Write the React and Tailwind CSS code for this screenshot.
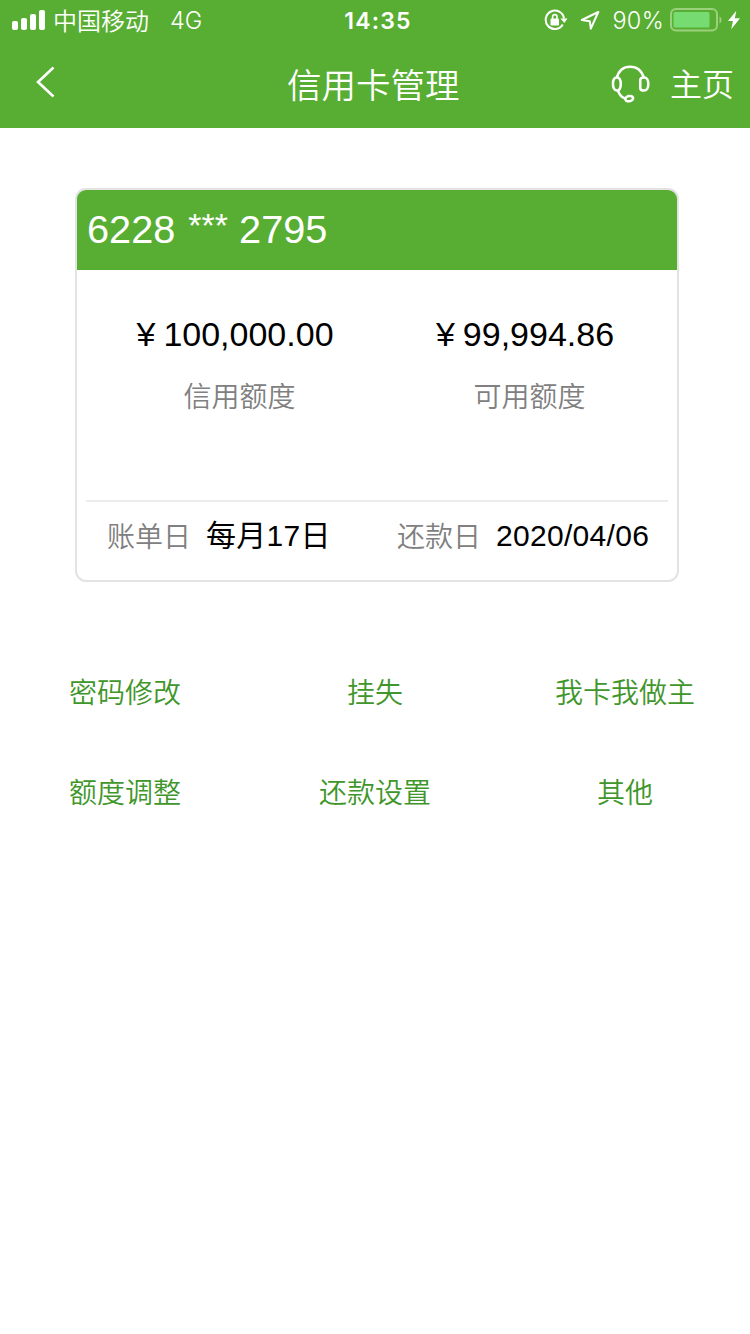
import React from 'react';

const StatusBar = () => (
  <div className="flex h-10 items-center pl-3 pr-2 font-['Inter','Noto_Sans_CJK_SC',sans-serif] text-2xl">
    <div className="flex flex-1 items-center">
      <svg width="34" height="20" viewBox="0 0 34 20" fill="currentColor">
        <rect x="0" y="11" width="6" height="9" rx="2" />
        <rect x="9" y="8" width="6" height="12" rx="2" />
        <rect x="18" y="4" width="6" height="16" rx="2" />
        <rect x="27" y="0" width="6" height="20" rx="2" />
      </svg>
      <span className="ml-[7px] font-['Noto_Sans_CJK_SC',sans-serif] font-[350] leading-10">中国移动</span>
      <span className="ml-[21px] pt-0.5 text-[23.5px] font-[350]">4G</span>
    </div>

    <span className="pl-0.5 pt-0.5 text-[23px] font-semibold tracking-[1.2px]">14:35</span>

    <div className="flex flex-1 items-center justify-end">
      {/* Rotation lock */}
      <svg width="24" height="22" viewBox="0 0 24 22" fill="none" stroke="currentColor" strokeWidth="2">
        <path d="M18.8 15.5A9.2 9.2 0 1 1 20 9.5" />
        <path d="M16.5 9.5h7l-3.2 4.500z" fill="currentColor" stroke="none" />
        <rect x="6.5" y="9.5" width="8.500" height="7" rx="1" fill="currentColor" stroke="none" />
        <path d="M8.6 10.5V7.8a2.200 2.200 0 0 1 4.400 0v2.700" strokeWidth="1.600" />
      </svg>
      {/* Location arrow */}
      <svg className="ml-3" width="20" height="20" viewBox="0 0 20 20" fill="none" stroke="currentColor" strokeWidth="2" strokeLinejoin="round">
        <path d="M18.300 2 1.800 10l8 1.200 1 7.500z" />
      </svg>
      <span className="ml-3 pt-0.5 text-[23.500px] font-[350] tracking-[0.3px]">90%</span>
      <svg className="ml-1.5" width="52" height="24" viewBox="0 0 52 24" fill="none">
        <rect x="1" y="1" width="46" height="21.500" rx="5" stroke="#9bd07c" strokeWidth="2" />
        <rect x="3.500" y="4" width="36" height="15.500" rx="1.500" fill="#76dc71" />
        <path d="M49.500 8.500c2.700 1.300 2.700 5.700 0 7z" fill="#9bd07c" />
      </svg>
      <svg className="ml-1.5 mr-0.5" width="12" height="20" viewBox="0 0 13 20" fill="currentColor">
        <path d="M9 0 0 11h5.300L3.500 20 13 8H7.400z" />
      </svg>
    </div>
  </div>
);

const NavBar = () => (
  <div className="flex h-[88px] items-center pl-9 pr-4">
    <div className="w-[251px]">
      <svg className="mb-1" width="19" height="32" viewBox="0 0 19 32" fill="none" stroke="currentColor" strokeWidth="2.6">
        <path d="M17.5 1.5 2 16l15.500 14.500" />
      </svg>
    </div>
    <h1 className="pt-1.5 text-[34.500px] font-[350]">信用卡管理</h1>
    <div className="flex flex-1 items-center justify-end">
      <svg className="mr-5" width="39" height="40" viewBox="0 0 40 40" fill="none" stroke="currentColor" strokeWidth="2.6">
        <path d="M6 13.5C8 6 13 2.300 19.500 2.300S31.500 6 33.500 13.500" />
        <path d="M6 13.300C8.500 13.300 10 15.500 10 20s-1.500 6.700-4 6.700S2 24 2 20s1.500-6.700 4-6.700z" />
        <path d="M34 13.300c2.500 0 4.300 2.700 4.300 6.700s-1.800 6.700-4.300 6.700c-2.300 0-4-1-4-2.700v-8c0-1.700 1.700-2.700 4-2.700z" />
        <path d="M7 26.500c1.500 4.500 4.500 7.500 8 8.500" />
        <ellipse cx="18.700" cy="35" rx="4" ry="2.700" transform="rotate(-12 18.700 35)" />
      </svg>
      <span className="pt-0.5 text-[32px] font-[350]">主页</span>
    </div>
  </div>
);

const Amount = ({ value, label }) => (
  <div className="flex w-[290px] shrink-0 flex-col items-center">
    <div className="flex items-center text-[34px] leading-[48px] text-black">
      <span className="mr-2">¥</span>
      <span>{value}</span>
    </div>
    <div className="mt-[15px] pl-[9px] text-[28px] font-[350] leading-[50px] text-[#808080]">{label}</div>
  </div>
);

const DateField = ({ label, value }) => (
  <div className="flex w-[290px] shrink-0 items-center">
    <span className="pt-0.5 text-[28px] font-[350] text-[#808080]">{label}</span>
    <span className="ml-[15px] pb-1 text-[30px] tracking-[0.3px] text-black">{value}</span>
  </div>
);

const amounts = [
  { label: '信用额度', value: '100,000.00' },
  { label: '可用额度', value: '99,994.86' },
];

const dates = [
  { label: '账单日', value: '每月17日' },
  { label: '还款日', value: '2020/04/06' },
];

const actions = ['密码修改', '挂失', '我卡我做主', '额度调整', '还款设置', '其他'];

const App = () => (
  <div className="min-h-[1334px] w-[750px] bg-white font-['Liberation_Sans','Noto_Sans_CJK_SC',sans-serif]">
    <header className="bg-[#58ae32] text-white">
      <StatusBar />
      <NavBar />
    </header>

    <section className="ml-[75px] mt-[60px] h-[394px] w-[604px] overflow-hidden rounded-[11px] border-2 border-[#e3e3e3]">
      <div className="flex h-20 items-center bg-[#58ae32] pb-0.5 pl-2.5 text-[39.700px] text-white">
        <span className="whitespace-pre leading-[60px]">
          6228 <span className="pl-0.5 align-[6px] text-[34px] leading-none">***</span> 2795
        </span>
      </div>
      <div className="flex h-[230px] px-[13px] pt-10">
        {amounts.map((item) => (
          <Amount key={item.label} {...item} />
        ))}
      </div>
      <div className="mx-[9px] flex h-[72px] items-center border-t-2 border-[#ececec] pl-[21px]">
        {dates.map((item) => (
          <DateField key={item.label} {...item} />
        ))}
      </div>
    </section>

    <div className="mt-[62px] grid grid-cols-3 text-[28px] text-[#3f962b]">
      {actions.map((action) => (
        <button key={action} className="h-[100px] font-[350]">
          {action}
        </button>
      ))}
    </div>
  </div>
);

export default App;
